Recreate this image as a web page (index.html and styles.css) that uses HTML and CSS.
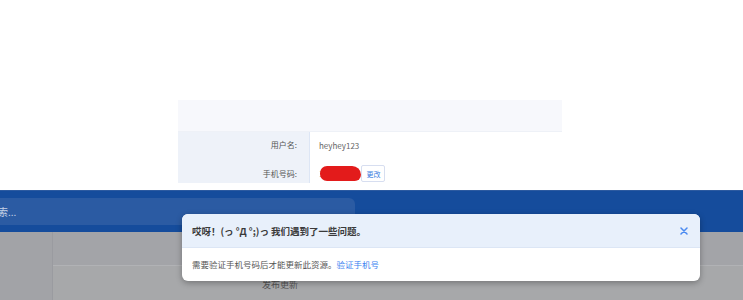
FILE: index.html
```html
<!DOCTYPE html>
<html>
<head>
    <title>账户设置</title>
    <link rel="stylesheet" href="styles.css">
</head>
<body>
    <div class="top">
        <div class="profile">
            <div class="profile-head"></div>
            <div class="profile-row">
                <div class="label">用户名:</div>
                <div class="value">heyhey123</div>
            </div>
            <div class="profile-row row-phone">
                <div class="label">手机号码:</div>
                <div class="value">
                    <span class="phone">1<span class="scribble"></span></span>
                    <button class="change">更改</button>
                </div>
            </div>
        </div>
    </div>

    <div class="header">
        <div class="search">索...</div>
    </div>

    <div class="content">
        <div class="side"></div>
        <div class="main">
            <div class="main-top"></div>
            <div class="main-bottom">发布更新</div>
        </div>
    </div>

    <div class="toast">
        <div class="toast-head">
            <span>哎呀！(っ °Д °;)っ 我们遇到了一些问题。</span>
            <svg class="close" width="8" height="8" viewBox="0 0 8 8">
                <path d="M1 1L7 7M7 1L1 7" stroke="#4a8af0" stroke-width="1.5" stroke-linecap="round"/>
            </svg>
        </div>
        <div class="toast-body">
            需要验证手机号码后才能更新此资源。<a href="#">验证手机号</a>
        </div>
    </div>
</body>
</html>
```

FILE: styles.css
```css
body {
    margin: 0;
    font-family: "Noto Sans CJK SC", "Noto Sans", sans-serif;
    background: #fff;
    overflow: hidden;
}

.top {
    height: 190px;
    padding-top: 100px;
    box-sizing: border-box;
}

.profile {
    width: 384px;
    margin-left: 178px;
    background: #f7f8fc;
}

.profile-head {
    height: 31px;
    border-bottom: 1px solid #eef1f7;
}

.profile-row {
    display: flex;
    height: 26px;
    font-size: 8px;
    color: #555;
}

.label {
    width: 132px;
    background: #eef2f9;
    border-right: 1px solid #dde6f5;
    text-align: right;
    padding-right: 12px;
    box-sizing: border-box;
    line-height: 26px;
}

.value {
    flex: 1;
    background: #fff;
    padding-left: 9px;
    display: flex;
    align-items: center;
    color: #666;
}

.row-phone {
    height: 25px;
}

.row-phone .label {
    line-height: 31px;
}

.row-phone .value {
    align-items: flex-end;
    padding-bottom: 1px;
}

.phone {
    display: flex;
    align-items: center;
    color: #888;
    height: 17px;
}

.scribble {
    display: inline-block;
    width: 41px;
    height: 15px;
    margin-left: -3px;
    background: #e31b1b;
    border-radius: 8px 10px 7px 8px;
}

.change {
    margin-left: 0;
    height: 17px;
    padding: 0 4px;
    font-family: inherit;
    font-size: 7px;
    color: #3b7de0;
    background: #fff;
    border: 1px solid #d7def0;
    border-radius: 2px;
}

.header {
    height: 42px;
    background: #154c9c;
    padding: 7px 0;
    box-sizing: border-box;
    border-top: 1px solid #2c5aa0;
}

.search {
    width: 355px;
    height: 27px;
    background: #2b5ba3;
    border-radius: 0 6px 6px 0;
    color: #c5d2e6;
    font-size: 10px;
    line-height: 27px;
    text-indent: -2px;
}

.content {
    display: flex;
    height: 68px;
    background: #a1a2a6;
}

.side {
    width: 52px;
    background: #a2a3a7;
    border-right: 1px solid #9a9ba0;
}

.main {
    flex: 1;
    display: flex;
    flex-direction: column;
}

.main-top {
    height: 33px;
    background: #a3a4a8;
    border-bottom: 1px solid #b1b2b5;
}

.main-bottom {
    flex: 1;
    background: #a7a8aa;
    font-size: 9px;
    color: #555;
    padding-left: 209px;
    padding-top: 12px;
}

.toast {
    position: absolute;
    left: 182px;
    top: 214px;
    width: 518px;
    border-radius: 6px;
    overflow: hidden;
    background: #fff;
    box-shadow: 0 2px 6px rgba(0, 0, 0, 0.3);
}

.toast-head {
    display: flex;
    justify-content: space-between;
    align-items: center;
    height: 33px;
    padding: 0 12px 0 10px;
    background: #e8f0fb;
    border-bottom: 1px solid #dce6f5;
    font-size: 9.5px;
    font-weight: 700;
    color: #3a3a3a;
}

.toast-body {
    height: 33px;
    line-height: 33px;
    padding-left: 10px;
    font-size: 8.5px;
    color: #555;
}

.toast-body a {
    color: #3b82f0;
    text-decoration: none;
}
```
